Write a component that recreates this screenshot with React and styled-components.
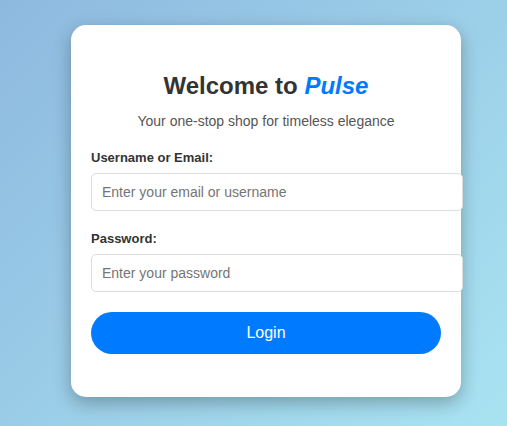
import styled, { createGlobalStyle } from 'styled-components'

const GlobalStyle = createGlobalStyle`
  html, body {
    margin: 0;
    padding: 0;
  }
  body {
    font-family: "Liberation Sans", Arial, sans-serif;
    background: linear-gradient(135deg, #8db9df 0%, #a9e3f1 100%);
    min-height: 100vh;
  }
  * {
    box-sizing: content-box;
  }
`

const Page = styled.div`
  min-height: 426px;
  display: flex;
  align-items: center;
  justify-content: center;
  padding: 0 0 4px 25px;
  box-sizing: border-box;
`

const Card = styled.form`
  width: 350px;
  padding: 47px 20px 43px;
  background: #fff;
  border-radius: 15px;
  box-shadow: 0 6px 18px rgba(0, 0, 0, 0.28);
`

const Title = styled.h2`
  margin: 0;
  text-align: center;
  font-size: 24px;
  line-height: 28px;
  font-weight: 700;
  color: #333;
`

const Brand = styled.span`
  color: #007bff;
  font-style: italic;
`

const Subtitle = styled.p`
  margin: 12px 0 20px;
  text-align: center;
  font-size: 14px;
  line-height: 18px;
  color: #555;
`

const Field = styled.div`
  margin-bottom: ${(p) => p.$gap}px;
`

const Label = styled.label`
  display: block;
  font-size: 13px;
  line-height: 16px;
  font-weight: 700;
  color: #333;
  margin-bottom: 7px;
`

const Input = styled.input`
  display: block;
  width: 100%;
  height: 18px;
  padding: 9px 10px;
  border: 1px solid #ddd;
  border-radius: 5px;
  font-family: "Liberation Sans", Arial, sans-serif;
  font-size: 14px;
  color: #333;
  outline: none;
  &::placeholder {
    color: #757575;
  }
`

const Button = styled.button`
  display: block;
  width: 100%;
  height: 42px;
  border: none;
  border-radius: 21px;
  background: #007bff;
  color: #fff;
  font-family: "Liberation Sans", Arial, sans-serif;
  font-size: 16px;
  cursor: pointer;
  padding: 0;
`

const App = () => {
  return (
    <>
      <GlobalStyle />
      <Page>
        <Card onSubmit={(e) => e.preventDefault()}>
          <Title>
            Welcome to <Brand>Pulse</Brand>
          </Title>
          <Subtitle>Your one-stop shop for timeless elegance</Subtitle>
          <Field $gap={20}>
            <Label>Username or Email:</Label>
            <Input type="text" placeholder="Enter your email or username" />
          </Field>
          <Field $gap={20}>
            <Label>Password:</Label>
            <Input type="password" placeholder="Enter your password" />
          </Field>
          <Button type="submit">Login</Button>
        </Card>
      </Page>
    </>
  )
}

export default App
